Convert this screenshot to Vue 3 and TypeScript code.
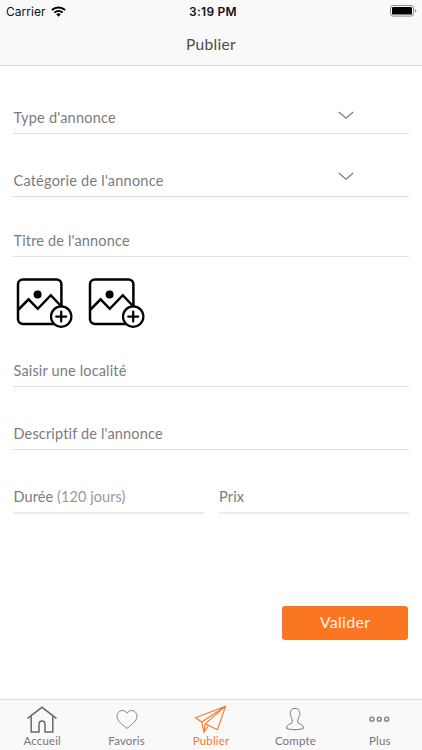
<script setup lang="ts">
interface Field {
  key: string
  label: string
  select?: boolean
}

const topFields: Field[] = [
  { key: 'type', label: "Type d'annonce", select: true },
  { key: 'category', label: "Catégorie de l'annonce", select: true },
  { key: 'heading', label: "Titre de l'annonce" },
]

const bottomFields: Field[] = [
  { key: 'place', label: 'Saisir une localité' },
  { key: 'description', label: "Descriptif de l'annonce" },
]

const tabs = [
  { key: 'home', label: 'Accueil' },
  { key: 'favorites', label: 'Favoris' },
  { key: 'publish', label: 'Publier' },
  { key: 'account', label: 'Compte' },
  { key: 'more', label: 'Plus' },
]

const activeTab = 'publish'
</script>

<template>
  <div class="screen">
    <header class="header">
      <div class="status">
        <div class="carrier">
          <span>Carrier</span>
          <svg class="wifi" width="15" height="11" viewBox="0 0 15 11">
            <path d="M0.9 4.1 A9.6 9.6 0 0 1 14.1 4.1" fill="none" stroke="#000" stroke-width="2" />
            <path d="M3.3 6.6 A6.2 6.2 0 0 1 11.7 6.6" fill="none" stroke="#000" stroke-width="1.9" />
            <path d="M5.2 8.3 A3.5 3.5 0 0 1 9.8 8.3 L7.5 10.7 Z" fill="#000" />
          </svg>
        </div>
        <div class="time">3:19 PM</div>
        <svg class="battery" width="27" height="12" viewBox="0 0 27 12">
          <rect x="0.5" y="0.5" width="23" height="10.6" rx="2.5" fill="none" stroke="#8c8c8c" />
          <rect x="2" y="2" width="20" height="7.6" rx="1.2" fill="#000" />
          <path d="M25 4 Q26.3 4.6 26.3 5.8 Q26.3 7 25 7.6 Z" fill="#8c8c8c" />
        </svg>
      </div>
      <h1 class="title">Publier</h1>
    </header>

    <main class="form">
      <div v-for="f in topFields" :key="f.key" class="field" :class="f.key">
        <span class="label">{{ f.label }}</span>
        <svg v-if="f.select" class="chevron" width="16" height="9" viewBox="0 0 16 9">
          <path d="M0.8 1 L8 7.2 L15.2 1" fill="none" stroke="#75757a" stroke-width="1.1" />
        </svg>
      </div>

      <div class="photos">
        <svg v-for="n in 2" :key="n" class="photo" width="58" height="52" viewBox="0 0 58 52">
          <g fill="none" stroke="#000" stroke-width="2.5" stroke-linejoin="round">
            <rect x="2" y="2.5" width="43.4" height="44.4" rx="4.8" />
            <path d="M2 33 L12.6 22.3 L21.8 31.8 L34.8 18.2 L45.4 29.5" stroke-linejoin="miter" />
          </g>
          <circle cx="21.6" cy="17.5" r="4" fill="#000" />
          <circle cx="45.2" cy="39.6" r="10.2" fill="#fff" stroke="#000" stroke-width="2.2" />
          <path d="M40.2 39.6 H50.2 M45.2 34.6 V44.6" stroke="#000" stroke-width="2.2" stroke-linecap="round" />
        </svg>
      </div>

      <div v-for="f in bottomFields" :key="f.key" class="field" :class="f.key">
        <span class="label">{{ f.label }}</span>
      </div>

      <div class="pair">
        <div class="field half">
          <span class="label duration">Durée <span class="hint">(120 jours)</span></span>
        </div>
        <div class="field half">
          <span class="label">Prix</span>
        </div>
      </div>

      <button class="submit" type="button">Valider</button>
    </main>

    <nav class="tabs">
      <div v-for="t in tabs" :key="t.key" class="tab" :class="[t.key, { active: t.key === activeTab }]">
        <svg class="icon" width="34" height="30" viewBox="0 0 34 30" fill="none" stroke="currentColor">
          <g v-if="t.key === 'home'" stroke-width="1.5">
            <path d="M2.6 13.4 L17 2.3 L31.4 13.4" />
            <path d="M6.2 11.2 V27 H14 V19.6 A3 3.6 0 0 1 20 19.6 V27 H27.8 V11.2" />
          </g>
          <path
            v-else-if="t.key === 'favorites'"
            stroke-width="0.9"
            d="M17 8.4 C15 4.9 11.4 5 9.3 6.6 C6.3 8.9 6.3 13 8.8 16 C10.6 18.3 14 20.8 17 23.4 C20 20.8 23.4 18.3 25.2 16 C27.7 13 27.7 8.9 24.7 6.6 C22.6 5 19 4.9 17 8.4 Z"
          />
          <g v-else-if="t.key === 'publish'" stroke-width="1.1" stroke-linejoin="round">
            <path d="M31.6 1.2 L1.4 12.8 L7.8 17 Z" />
            <path d="M7.8 17 L10 27.2 L11.2 18.8 L31.6 1.2" />
            <path d="M10 27.2 L14 21.4 M11.2 18.8 L23.4 24.8 L31.6 1.2" />
          </g>
          <path
            v-else-if="t.key === 'account'"
            stroke-width="1"
            d="M17 3.4 C13.3 3.4 12.2 6.2 12.3 8.6 C12 9.8 12.4 10.8 13 11.3 C13.2 13.2 13.9 14.2 14.4 15 C14.5 18.2 13.5 18.5 11.9 19 C9.4 19.8 8.7 21 8.6 23.4 C11.8 25.1 22.2 25.1 25.4 23.4 C25.3 21 24.6 19.8 22.1 19 C20.5 18.5 19.5 18.2 19.6 15 C20.1 14.2 20.8 13.2 21 11.3 C21.6 10.8 22 9.8 21.7 8.6 C21.8 6.2 20.7 3.4 17 3.4 Z"
          />
          <g v-else stroke-width="1.3">
            <circle cx="8.9" cy="14.2" r="2" />
            <circle cx="16.3" cy="14.2" r="2" />
            <circle cx="23.7" cy="14.2" r="2" />
          </g>
        </svg>
        <span class="tab-label">{{ t.label }}</span>
      </div>
    </nav>
  </div>
</template>

<style>
body {
  background: #fff;
}
</style>

<style scoped>
.screen {
  display: flex;
  flex-direction: column;
  width: 422px;
  height: 750px;
  overflow: hidden;
  background: #fff;
  font-family: Lato, 'Liberation Sans', sans-serif;
}

.header {
  box-sizing: border-box;
  flex: none;
  height: 66px;
  border-bottom: 1px solid #dcdcdc;
  background: #f9f9f9;
}

.status {
  display: grid;
  grid-template-columns: 1fr auto 1fr;
  align-items: center;
  height: 22px;
  padding: 0 5px 0 6px;
  font-family: Inter, sans-serif;
  font-size: 12px;
  color: #111;
}

.carrier {
  display: flex;
  align-items: center;
  gap: 5px;
  letter-spacing: 0.05px;
}

.time {
  padding-left: 3px;
  font-weight: 600;
  letter-spacing: 0.25px;
}

.battery {
  justify-self: end;
}

.title {
  margin: 0;
  padding-top: 11px;
  font-size: 15.5px;
  font-weight: 400;
  line-height: 22px;
  letter-spacing: 0.35px;
  text-align: center;
  color: #4b4b4d;
}

.form {
  display: flex;
  flex: 1;
  flex-direction: column;
  padding: 0 13px;
}

.field {
  box-sizing: border-box;
  display: flex;
  flex: none;
  align-items: flex-end;
  justify-content: space-between;
  height: 63px;
  padding-bottom: 5px;
  border-bottom: 1px solid #dedede;
  color: #7b7b7e;
}

.type {
  height: 68px;
}

.heading {
  height: 60px;
}

.label {
  padding-left: 0.5px;
  font-size: 14.5px;
  line-height: 20px;
  letter-spacing: 0.16px;
  white-space: pre;
}

.type .label,
.category .label {
  letter-spacing: 0.22px;
}

.chevron {
  margin: 0 55px 8px 0;
}

.category .chevron {
  margin-bottom: 10px;
}

.photos {
  display: flex;
  gap: 14px;
  height: 52px;
  margin: 20px 0 0 3px;
}

.place {
  height: 58px;
}

.pair {
  display: flex;
  gap: 15px;
}

.half {
  flex: 1;
  height: 64px;
  border-bottom: 2px solid #ebebeb;
}

.duration {
  letter-spacing: 0.08px;
}

.hint {
  color: #98989b;
}

.submit {
  align-self: flex-end;
  width: 126px;
  height: 34px;
  margin-top: 92px;
  margin-right: 1px;
  padding: 0 0 3px;
  border: 0;
  border-radius: 3px;
  background: #fb7622;
  font-family: inherit;
  font-size: 16px;
  letter-spacing: 0.3px;
  color: #fff3e6;
}

.tabs {
  box-sizing: border-box;
  display: grid;
  flex: none;
  grid-template-columns: repeat(5, 1fr);
  height: 51px;
  border-top: 1px solid #dadada;
  background: #f9f9f9;
}

.tab {
  display: flex;
  flex-direction: column;
  align-items: center;
  padding-top: 5px;
  color: #77777d;
}

.icon {
  flex: none;
}

.tab-label {
  margin-top: -1px;
  font-size: 11.5px;
  line-height: 14px;
  letter-spacing: 0.15px;
}

.home .icon {
  color: #686873;
}

.active {
  color: #f47a2f;
}
</style>
